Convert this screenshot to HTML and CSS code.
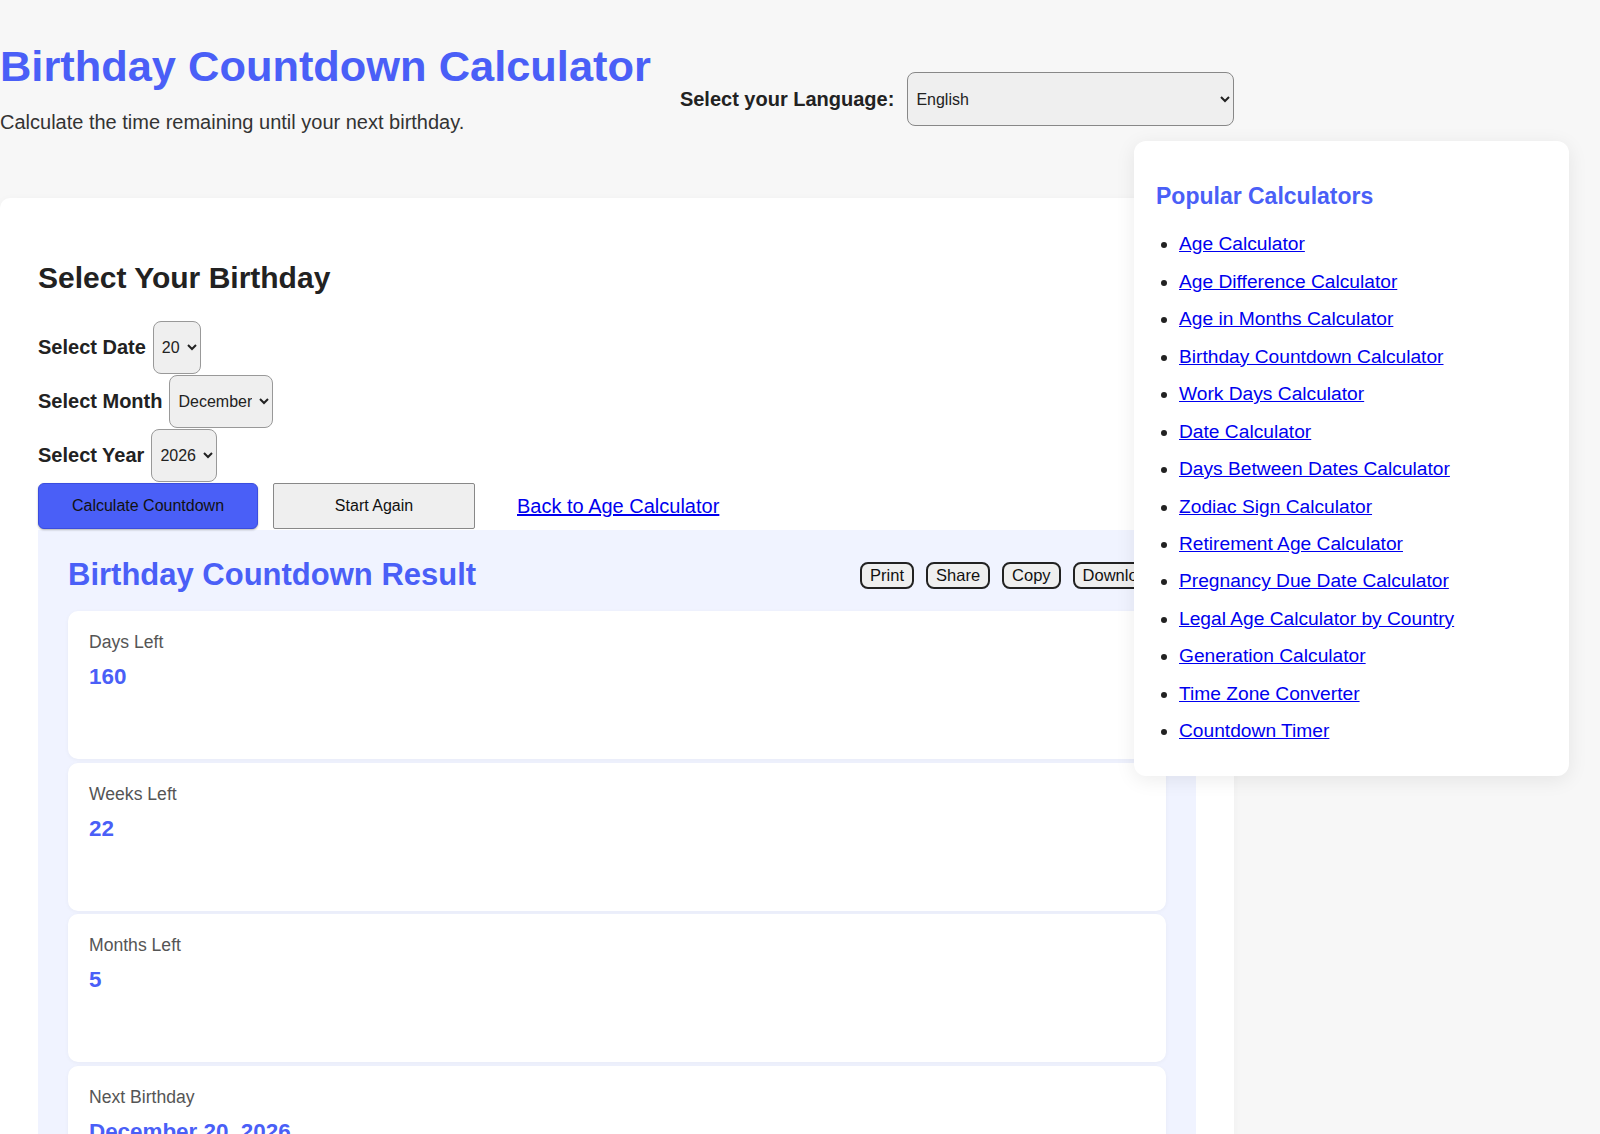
FILE: index.html
```html
<!DOCTYPE html>
<html lang="en">
<head>
    <meta charset="UTF-8">
    <meta name="viewport" content="width=device-width, initial-scale=1.0">
    <title>Birthday Countdown Calculator</title>
    <link rel="stylesheet" href="styles.css">
</head>
<body>
    <div class="page">
        <header class="top">
            <div class="intro">
                <h1>Birthday Countdown Calculator</h1>
                <p>Calculate the time remaining until your next birthday.</p>
            </div>
            <div class="lang">
                <label for="lang">Select your Language:</label>
                <select id="lang">
                    <option>English</option>
                </select>
            </div>
        </header>

        <main class="calc">
            <h2>Select Your Birthday</h2>
            <div class="field">
                <label for="day">Select Date</label>
                <select id="day" class="pick"><option>20</option></select>
            </div>
            <div class="field">
                <label for="month">Select Month</label>
                <select id="month" class="pick"><option>December</option></select>
            </div>
            <div class="field">
                <label for="year">Select Year</label>
                <select id="year" class="pick"><option>2026</option></select>
            </div>
            <div class="actions">
                <button class="btn btn_go">Calculate Countdown</button>
                <button class="btn btn_reset">Start Again</button>
                <a href="#" class="back">Back to Age Calculator</a>
            </div>

            <section class="result">
                <div class="result_head">
                    <h2>Birthday Countdown Result</h2>
                    <div class="tools">
                        <button>Print</button>
                        <button>Share</button>
                        <button>Copy</button>
                        <button>Download</button>
                    </div>
                </div>
                <div class="stat">
                    <div class="stat_label">Days Left</div>
                    <div class="stat_value">160</div>
                </div>
                <div class="stat">
                    <div class="stat_label">Weeks Left</div>
                    <div class="stat_value">22</div>
                </div>
                <div class="stat">
                    <div class="stat_label">Months Left</div>
                    <div class="stat_value">5</div>
                </div>
                <div class="stat">
                    <div class="stat_label">Next Birthday</div>
                    <div class="stat_value">December 20, 2026</div>
                </div>
            </section>
        </main>

        <!-- floating list of other calculators -->
        <aside class="popular">
            <h3>Popular Calculators</h3>
            <ul>
                <li><a href="#">Age Calculator</a></li>
                <li><a href="#">Age Difference Calculator</a></li>
                <li><a href="#">Age in Months Calculator</a></li>
                <li><a href="#">Birthday Countdown Calculator</a></li>
                <li><a href="#">Work Days Calculator</a></li>
                <li><a href="#">Date Calculator</a></li>
                <li><a href="#">Days Between Dates Calculator</a></li>
                <li><a href="#">Zodiac Sign Calculator</a></li>
                <li><a href="#">Retirement Age Calculator</a></li>
                <li><a href="#">Pregnancy Due Date Calculator</a></li>
                <li><a href="#">Legal Age Calculator by Country</a></li>
                <li><a href="#">Generation Calculator</a></li>
                <li><a href="#">Time Zone Converter</a></li>
                <li><a href="#">Countdown Timer</a></li>
            </ul>
        </aside>
    </div>
</body>
</html>
```

FILE: styles.css
```css
body{
    margin: 0;
    background-color: #f7f7f7;
    font-family: "Liberation Sans", Arial, sans-serif;
    color: #222;
}
.page{
    position: relative;
    width: 1234px;
}

/* header */
.top{
    display: flex;
    align-items: flex-start;
    gap: 29px;
    white-space: nowrap;
}
.intro,
.lang{
    flex: none;
}
.intro h1{
    margin: 42px 0 19px;
    font-size: 43.4px;
    line-height: 1.15;
    color: #4a5ff7;
}
.intro p{
    margin: 0;
    font-size: 20px;
    line-height: 1.15;
    color: #333;
}
.lang{
    display: flex;
    align-items: center;
    gap: 13px;
    margin-top: 72px;
}
.lang label{
    font-size: 20px;
    font-weight: bold;
}
.lang select{
    width: 327px;
    height: 54px;
    padding: 0 4px;
    font-family: "Liberation Sans", Arial, sans-serif;
    font-size: 16px;
    color: #222;
    background-color: #efefef;
    border: 1px solid #888;
    border-radius: 8px;
}

/* main card */
.calc{
    margin-top: 64px;
    padding: 38px 38px 0;
    background-color: #fff;
    border-radius: 10px;
    box-shadow: 0 2px 10px rgba(0, 0, 0, 0.04);
}
.calc > h2{
    margin: 25px 0 26px;
    font-size: 30px;
    line-height: 1.15;
}
.field{
    display: flex;
    align-items: center;
    gap: 7px;
    margin-bottom: 1px;
}
.field label{
    font-size: 20px;
    font-weight: bold;
}
.pick{
    height: 53px;
    padding: 0 4px;
    font-family: "Liberation Sans", Arial, sans-serif;
    font-size: 16px;
    color: #222;
    background-color: #efefef;
    border: 1px solid #999;
    border-radius: 8px;
}
.actions{
    display: flex;
    align-items: center;
}
.btn{
    height: 46px;
    font-family: "Liberation Sans", Arial, sans-serif;
    font-size: 16px;
    color: #111;
}
.btn_go{
    width: 220px;
    background-color: #4a5ff7;
    border: 1px solid #3a4ddf;
    border-radius: 6px;
    box-shadow: 0 1px 2px rgba(0, 0, 0, 0.3);
}
.btn_reset{
    width: 202px;
    margin-left: 15px;
    background-color: #efefef;
    border: 1px solid #888;
    border-radius: 2px;
}
.back{
    margin-left: 42px;
    font-size: 20px;
    color: #0000ee;
}

/* results */
.result{
    margin-top: 1px;
    padding: 27px 30px 30px;
    background-color: #f0f3ff;
}
.result_head{
    display: flex;
    justify-content: space-between;
    align-items: center;
    margin-bottom: 18px;
}
.result_head h2{
    margin: 0;
    font-size: 31px;
    line-height: 1.15;
    color: #4a5ff7;
}
.tools{
    display: flex;
    gap: 12px;
}
.tools button{
    padding: 2px 8px;
    font-family: "Liberation Sans", Arial, sans-serif;
    font-size: 16.5px;
    color: #111;
    background-color: #efefef;
    border: 2px solid #222;
    border-radius: 8px;
}
.stat{
    box-sizing: border-box;
    min-height: 148px;
    margin-bottom: 3.5px;
    padding: 21px 21px 20px;
    background-color: #fff;
    border-radius: 10px;
    box-shadow: 0 1px 4px rgba(0, 0, 0, 0.04);
}
.stat_label{
    margin-bottom: 12px;
    font-size: 17.6px;
    line-height: 1.15;
    color: #555;
}
.stat_value{
    font-size: 22.4px;
    font-weight: bold;
    line-height: 1.15;
    color: #4a5ff7;
}

/* sidebar */
.popular{
    position: absolute;
    top: 141px;
    left: 1134px;
    box-sizing: border-box;
    width: 435px;
    padding: 22px 22px 20px;
    background-color: #fff;
    border-radius: 12px;
    box-shadow: 0 4px 20px rgba(0, 0, 0, 0.08);
}
.popular h3{
    margin: 20px 0 16px;
    font-size: 23px;
    line-height: 1.15;
    color: #4a5ff7;
}
.popular ul{
    margin: 0 0 6px;
    padding-left: 23px;
    font-size: 19.2px;
    line-height: 1.95;
}
.popular a{
    color: #0000ee;
}
```
